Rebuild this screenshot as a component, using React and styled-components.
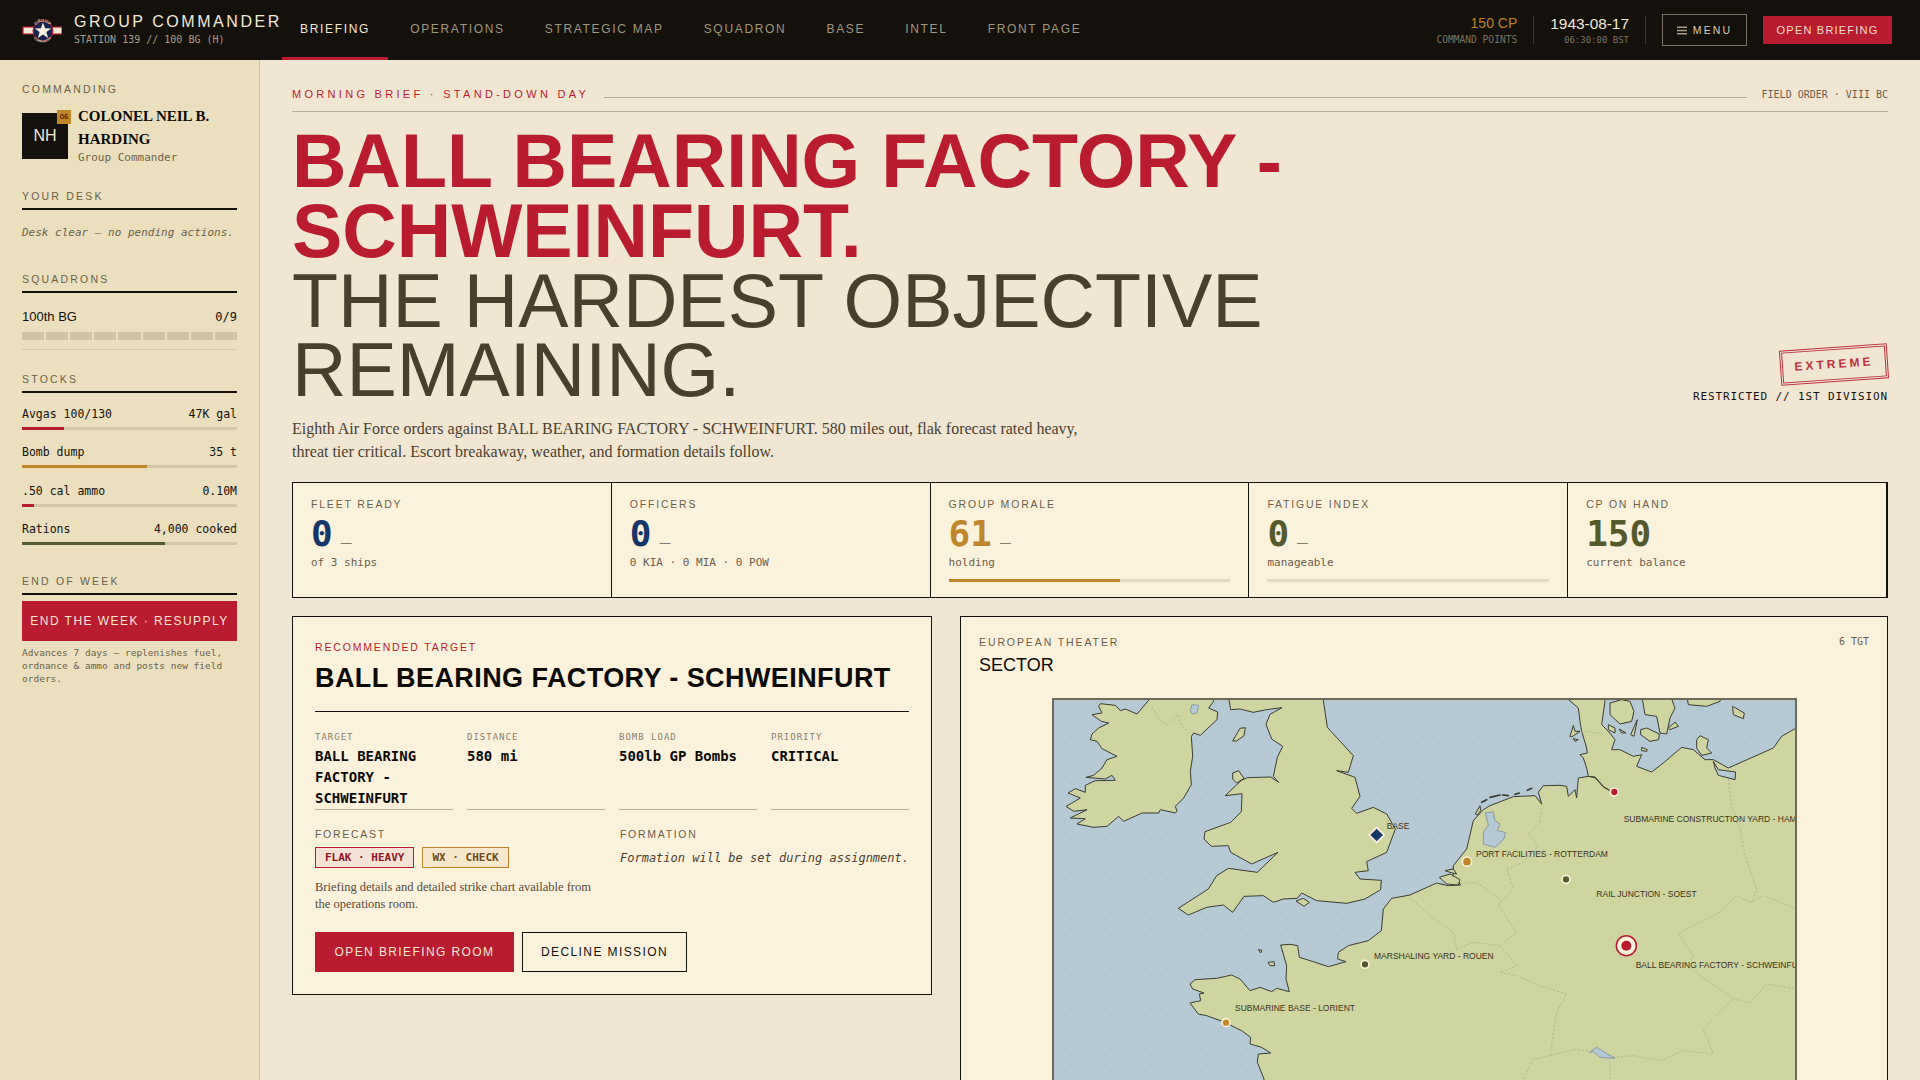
import React from 'react';
import styled, { createGlobalStyle } from 'styled-components';

const INK = '#14100c';
const RED = '#b81c2e';
const BRASS = '#c0862a';
const NAVY = '#14366a';
const OLIVE = '#555a2c';
const MUTED = '#6b5f4b';
const SANS = '"Liberation Sans", Arial, sans-serif';
const SERIF = '"Liberation Serif", "Times New Roman", serif';
const MONO = '"DejaVu Sans Mono", "Liberation Mono", monospace';

const GlobalStyle = createGlobalStyle`
  html, body {
    margin: 0;
    height: 100%;
    overflow: hidden;
    background: #f1e6d2;
    font-family: ${SANS};
    color: ${INK};
  }
  * { box-sizing: border-box; }
`;

const Shell = styled.div`
  height: 100vh;
  display: flex;
  flex-direction: column;
  overflow: hidden;
`;

const Header = styled.header`
  height: 60px;
  flex: none;
  background: ${INK};
  display: flex;
  align-items: stretch;
  padding: 0 28px 0 22px;
`;

const Brand = styled.div`
  display: flex;
  align-items: center;
  gap: 12px;
  width: 260px;
  flex: none;
`;

const BrandText = styled.div`
  display: flex;
  flex-direction: column;
  gap: 3px;
  margin-top: -2px;
`;

const BrandTitle = styled.div`
  font-size: 16px;
  line-height: 18px;
  letter-spacing: 2.56px;
  color: #f2e8d5;
  white-space: nowrap;
`;

const BrandSub = styled.div`
  font-family: ${MONO};
  font-size: 10px;
  line-height: 12px;
  color: #a89e88;
  white-space: nowrap;
`;

const Nav = styled.nav`
  display: flex;
  gap: 4px;
`;

const Tab = styled.a`
  display: flex;
  align-items: center;
  padding: 0 18px;
  font-size: 12px;
  letter-spacing: 1.68px;
  white-space: nowrap;
  color: ${(p) => (p.$active ? '#f2e8d5' : '#a0977f')};
  border-bottom: 3px solid ${(p) => (p.$active ? RED : 'transparent')};
`;

const HeaderRight = styled.div`
  margin-left: auto;
  display: flex;
  align-items: center;
`;

const Readout = styled.div`
  display: flex;
  flex-direction: column;
  align-items: flex-end;
  height: 28px;
  justify-content: center;
  gap: 2px;
  padding-right: 16px;
  margin-right: 16px;
  border-right: 1px solid #3c362c;
`;

const ReadoutValue = styled.div`
  font-size: ${(p) => p.$size}px;
  line-height: 17px;
  color: ${(p) => p.$color};
`;

const ReadoutSub = styled.div`
  font-family: ${MONO};
  font-size: ${(p) => p.$size}px;
  line-height: 12px;
  color: #7a7361;
`;

const MenuButton = styled.button`
  height: 32px;
  width: 85px;
  display: flex;
  align-items: center;
  justify-content: center;
  gap: 6px;
  background: transparent;
  border: 1px solid #7a7363;
  color: #d8cfba;
  font-family: ${SANS};
  font-size: 10.5px;
  letter-spacing: 2.1px;
  padding: 0;
`;

const HeaderCta = styled.button`
  margin-left: 16px;
  height: 28px;
  width: 129px;
  background: ${RED};
  border: none;
  color: #f2dfcf;
  font-family: ${SANS};
  font-size: 11px;
  letter-spacing: 1.2px;
  padding: 0;
`;

const Body = styled.div`
  flex: 1;
  min-height: 0;
  display: flex;
`;

const Sidebar = styled.aside`
  width: 260px;
  flex: none;
  background: #ebdfbd;
  border-right: 1px solid #cdbf9f;
  padding: 23px 22px 0;
  display: flex;
  flex-direction: column;
`;

const SideLabel = styled.div`
  font-size: 10.5px;
  line-height: 12px;
  letter-spacing: 2.2px;
  color: ${MUTED};
`;

const SideHead = styled(SideLabel)`
  margin-top: ${(p) => p.$top}px;
  padding-bottom: 6px;
  border-bottom: 2px solid ${INK};
`;

const Officer = styled.div`
  margin-top: 10px;
  display: flex;
  gap: 10px;
`;

const Avatar = styled.div`
  position: relative;
  margin-top: 8px;
  width: 46px;
  height: 46px;
  flex: none;
  background: ${INK};
  color: #f2e8d5;
  font-size: 16px;
  display: flex;
  align-items: center;
  justify-content: center;
`;

const RankBadge = styled.div`
  position: absolute;
  top: -3px;
  right: -3px;
  width: 14px;
  height: 14px;
  background: ${BRASS};
  color: ${INK};
  font-family: ${MONO};
  font-size: 7px;
  display: flex;
  align-items: center;
  justify-content: center;
`;

const OfficerName = styled.div`
  font-family: ${SERIF};
  font-weight: 700;
  font-size: 15px;
  line-height: 23px;
  color: #0c0a07;
`;

const OfficerRole = styled.div`
  font-family: ${MONO};
  font-size: 11px;
  line-height: 14px;
  color: ${MUTED};
`;

const DeskNote = styled.div`
  margin-top: 16px;
  font-family: ${MONO};
  font-style: italic;
  font-size: 11px;
  line-height: 14px;
  color: ${MUTED};
`;

const SquadRow = styled.div`
  margin-top: 17px;
  display: flex;
  justify-content: space-between;
  align-items: center;
  line-height: 14px;
  font-size: 13px;
`;

const MonoValue = styled.span`
  font-family: ${MONO};
  font-size: 12px;
`;

const Segments = styled.div`
  margin-top: 8px;
  display: grid;
  grid-template-columns: repeat(9, 1fr);
  gap: 2px;
  padding-bottom: 9px;
  border-bottom: 1px solid #d8cba8;
`;

const Segment = styled.div`
  height: 8px;
  background: #d1c3a5;
`;

const Stocks = styled.div`
  margin-top: 14px;
  display: flex;
  flex-direction: column;
  gap: 15.33px;
`;

const StockRow = styled.div`
  display: flex;
  justify-content: space-between;
  font-family: ${MONO};
  font-size: 11.5px;
  line-height: 14px;
`;

const Track = styled.div`
  margin-top: ${(p) => p.$top || 6}px;
  height: 3px;
  background: ${(p) => p.$bg || '#d3c6a8'};
`;

const Fill = styled.div`
  height: 100%;
  background: ${(p) => p.$color};
`;

const WeekButton = styled.button`
  margin-top: 6px;
  height: 40px;
  width: 100%;
  background: ${RED};
  border: none;
  color: #f6e6d4;
  font-family: ${SANS};
  font-size: 12px;
  letter-spacing: 1.45px;
  padding: 0;
  white-space: nowrap;
`;

const WeekNote = styled.div`
  margin-top: 5px;
  font-family: ${MONO};
  font-size: 9.5px;
  line-height: 13px;
  color: ${MUTED};
`;

const Main = styled.main`
  flex: 1;
  min-width: 0;
  padding: 28px 32px 0;
`;

const Eyebrow = styled.div`
  display: flex;
  align-items: center;
  gap: 15px;
  padding-bottom: 10px;
  border-bottom: 1px solid #b8ad98;
`;

const EyebrowText = styled.div`
  font-size: 11px;
  line-height: 13px;
  letter-spacing: 3.3px;
  color: ${RED};
  white-space: nowrap;
`;

const EyebrowLine = styled.div`
  flex: 1;
  height: 1px;
  margin-top: 6px;
  background: #b8ad98;
`;

const EyebrowMeta = styled.div`
  font-family: ${MONO};
  font-size: 10px;
  line-height: 13px;
  color: ${MUTED};
  white-space: nowrap;
`;

const Hero = styled.div`
  margin-top: 15px;
  display: flex;
  justify-content: space-between;
  align-items: flex-end;
`;

const HeroTitle = styled.h1`
  margin: 0;
  width: 1100px;
  font-size: 75.4px;
  line-height: 69.8px;
  font-weight: 400;
  color: #4a3f2c;
`;

const HeroStrong = styled.span`
  display: block;
  font-weight: 700;
  color: ${RED};
`;

const HeroAside = styled.div`
  display: flex;
  flex-direction: column;
  align-items: flex-end;
  gap: 8px;
  padding-bottom: 3px;
`;

const Stamp = styled.div`
  transform: rotate(-4deg);
  border: 3px double ${RED};
  padding: 7px 11.5px;
  font-weight: 700;
  font-size: 12px;
  line-height: 15px;
  letter-spacing: 3px;
  color: ${RED};
  opacity: 0.9;
`;

const Restricted = styled.div`
  font-family: ${MONO};
  font-size: 11px;
  line-height: 13px;
  letter-spacing: 0.88px;
  white-space: nowrap;
`;

const Lede = styled.p`
  margin: 12px 0 0;
  max-width: 800px;
  font-family: ${SERIF};
  font-size: 16px;
  line-height: 22.5px;
  color: #4a3f2c;
`;

const Stats = styled.div`
  margin-top: 19px;
  height: 116px;
  display: grid;
  grid-template-columns: repeat(5, 1fr);
  background: #fbf2dc;
  border: 1px solid ${INK};
`;

const StatCell = styled.div`
  border-right: 1px solid ${INK};
  padding: 15px 18px 0;
`;

const StatLabel = styled.div`
  font-size: 10.5px;
  line-height: 13px;
  letter-spacing: 1.8px;
  color: ${MUTED};
`;

const StatValue = styled.div`
  margin-top: 5px;
  height: 35px;
  display: flex;
  align-items: baseline;
  gap: 8px;
  font-family: ${MONO};
  font-weight: 700;
  font-size: 36px;
  line-height: 35px;
  color: ${(p) => p.$color};
`;

const StatDelta = styled.span`
  font-family: ${SANS};
  font-weight: 400;
  font-size: 11px;
  color: ${MUTED};
`;

const StatSub = styled.div`
  margin-top: 5px;
  font-family: ${MONO};
  font-size: 11px;
  line-height: 14px;
  color: ${MUTED};
`;

const Lower = styled.div`
  margin-top: 18px;
  display: grid;
  grid-template-columns: 640px 928px;
  gap: 28px;
  align-items: start;
`;

const Card = styled.section`
  background: #fbf2dc;
  border: 1px solid ${INK};
  padding: 24px 22px 22px;
`;

const CardKicker = styled.div`
  font-size: 10.5px;
  line-height: 12px;
  letter-spacing: 1.83px;
  color: ${RED};
`;

const CardTitle = styled.h2`
  margin: 9px 0 0;
  padding-bottom: 17px;
  font-size: 27px;
  line-height: 32px;
  font-weight: 700;
  letter-spacing: 0.42px;
  color: #0c0a07;
  border-bottom: 1px solid ${INK};
  white-space: nowrap;
`;

const FactGrid = styled.div`
  margin-top: 20px;
  display: grid;
  grid-template-columns: repeat(4, 1fr);
  gap: 14px;
`;

const Fact = styled.div`
  border-bottom: 1px solid #b8ad98;
`;

const FactLabel = styled.div`
  font-family: ${MONO};
  font-size: 9px;
  line-height: 11px;
  letter-spacing: 1px;
  color: #8a7f6a;
`;

const FactValue = styled.div`
  margin-top: 3px;
  font-family: ${MONO};
  font-weight: 700;
  font-size: 14px;
  line-height: 21px;
  color: #0c0a07;
`;

const DetailGrid = styled.div`
  margin-top: 18px;
  display: grid;
  grid-template-columns: 1fr 1fr;
  gap: 16px;
`;

const DetailLabel = styled.div`
  font-size: 10.5px;
  line-height: 12px;
  letter-spacing: 1.7px;
  color: ${MUTED};
`;

const Badges = styled.div`
  margin-top: 7px;
  display: flex;
  gap: 8px;
`;

const Badge = styled.span`
  height: 21px;
  padding: 0 9px;
  display: flex;
  align-items: center;
  font-family: ${MONO};
  font-weight: 700;
  font-size: 11px;
  white-space: nowrap;
  border: 1px solid ${(p) => p.$border};
  background: ${(p) => p.$bg};
  color: ${(p) => p.$color};
`;

const CardNote = styled.p`
  margin: 11px 0 0;
  font-family: ${SERIF};
  font-size: 12.5px;
  line-height: 17px;
  color: #574b38;
`;

const FormationNote = styled.div`
  margin-top: 10px;
  font-family: ${MONO};
  font-style: italic;
  font-size: 12px;
  line-height: 16px;
  color: #4a3f2c;
  white-space: nowrap;
`;

const Actions = styled.div`
  margin-top: 19px;
  display: flex;
  gap: 8px;
`;

const ActionButton = styled.button`
  height: 40px;
  width: ${(p) => p.$width}px;
  padding: 0;
  font-family: ${SANS};
  font-size: 12px;
  letter-spacing: 1.4px;
  background: ${(p) => (p.$primary ? RED : 'transparent')};
  color: ${(p) => (p.$primary ? '#f6e6d4' : INK)};
  border: ${(p) => (p.$primary ? 'none' : `1px solid ${INK}`)};
`;

const MapPanel = styled.section`
  background: #fbf2dc;
  border: 1px solid ${INK};
  padding: 19px 18px 18px;
  min-height: 620px;
`;

const MapHead = styled.div`
  display: flex;
  justify-content: space-between;
`;

const MapKicker = styled.div`
  font-size: 10.5px;
  line-height: 12px;
  letter-spacing: 1.9px;
  color: ${MUTED};
`;

const MapTitle = styled.div`
  margin-top: 7px;
  font-size: 18px;
  line-height: 21px;
  color: #0c0a07;
`;

const MapCount = styled.div`
  font-family: ${MONO};
  font-size: 10px;
  line-height: 12px;
  color: ${MUTED};
`;

const MapFrame = styled.div`
  margin: 22px auto 0;
  width: 745px;
  height: 600px;
  border: 2px solid #6f6a58;
`;

const MapSvg = styled.svg`
  display: block;
  width: 100%;
  height: 100%;
`;

const MapLabel = styled.text`
  font-family: ${SANS};
  font-size: 25.5px;
  fill: #3a3222;
`;

const NAV_ITEMS = ['BRIEFING', 'OPERATIONS', 'STRATEGIC MAP', 'SQUADRON', 'BASE', 'INTEL', 'FRONT PAGE'];

const STOCKS = [
  { name: 'Avgas 100/130', value: '47K gal', pct: 19.5, color: RED },
  { name: 'Bomb dump', value: '35 t', pct: 58, color: BRASS },
  { name: '.50 cal ammo', value: '0.10M', pct: 5.5, color: RED },
  { name: 'Rations', value: '4,000 cooked', pct: 66.5, color: OLIVE },
];

const STATS = [
  { label: 'FLEET READY', value: '0', delta: '—', sub: 'of 3 ships', color: NAVY },
  { label: 'OFFICERS', value: '0', delta: '—', sub: '0 KIA · 0 MIA · 0 POW', color: NAVY },
  { label: 'GROUP MORALE', value: '61', delta: '—', sub: 'holding', color: BRASS, bar: 61 },
  { label: 'FATIGUE INDEX', value: '0', delta: '—', sub: 'manageable', color: OLIVE, bar: 0 },
  { label: 'CP ON HAND', value: '150', sub: 'current balance', color: OLIVE },
];

const FACTS = [
  { label: 'TARGET', value: 'BALL BEARING FACTORY - SCHWEINFURT' },
  { label: 'DISTANCE', value: '580 mi' },
  { label: 'BOMB LOAD', value: '500lb GP Bombs' },
  { label: 'PRIORITY', value: 'CRITICAL' },
];

// outlines traced in 3x map units, viewBox below maps them back to page pixels
const LAND = [
  'M336 22 L291 75 256 60 241 65 226 49 181 44 176 52 186 72 156 77 184 97 206 102 176 117 156 135 151 152 171 157 186 179 231 202 201 212 186 237 161 259 138 265 196 270 216 259 226 274 166 275 136 289 136 310 106 299 84 312 121 327 96 342 78 352 101 367 141 362 91 387 136 389 111 405 161 415 201 412 236 382 251 397 306 372 356 372 361 362 406 372 411 367 406 352 431 327 454 287 451 247 458 202 454 142 461 132 481 139 531 92 533 69 506 57 521 37 516 22 Z',
  'M565 20 L572 62 600 60 640 70 680 62 726 56 690 76 678 106 695 150 728 172 712 205 700 262 716 280 692 264 622 266 604 274 556 320 606 314 604 368 572 400 495 428 492 450 514 472 565 470 572 490 635 525 714 490 652 550 565 538 530 560 505 600 415 658 445 678 500 655 550 648 578 670 612 622 670 620 700 640 730 630 772 628 785 612 830 635 920 643 975 630 1022 602 1024 574 960 570 945 550 985 545 980 518 1040 490 1066 420 1040 375 1000 355 950 373 935 358 960 322 945 265 890 245 925 250 940 200 862 115 848 20 Z',
  'M672 1900 L672 1170 652 1120 655 1095 692 1092 665 1075 630 1065 632 1045 605 1025 590 1018 555 1000 500 980 475 975 450 942 482 935 478 915 492 912 458 900 450 885 465 872 530 868 575 858 600 870 630 905 660 895 695 908 710 898 748 908 738 870 740 830 722 768 750 766 773 770 778 805 820 818 865 833 918 818 893 810 895 790 925 770 985 755 1024 725 1030 660 1055 628 1110 618 1190 582 1225 590 1262 588 1240 560 1240 530 1280 480 1300 395 1330 362 1350 350 1420 323 1485 320 1505 345 1495 310 1510 290 1560 289 1580 292 1585 322 1605 302 1610 327 1615 267 1645 262 1665 264 1690 292 1710 305 1690 294 1665 266 1645 262 1640 237 1630 207 1620 197 1642 192 1640 177 1625 127 1620 97 1615 57 1580 27 1575 17 1695 17 1695 37 1685 107 1705 127 1725 152 1715 182 1740 182 1780 202 1805 197 1790 232 1835 249 1870 222 1925 175 1960 182 1995 212 2020 212 2065 237 2200 177 2225 142 2265 119 2290 107 2290 1900 Z',
  'M1805 17 L1815 77 1850 82 1860 132 1880 135 1890 87 1905 57 1890 17 Z',
  'M1940 17 L1945 47 2000 52 2040 37 2045 17 Z',
];

const ISLANDS = [
  'M578 156 L600 118 616 116 612 140 590 156 Z',
  'M578 252 L596 245 612 268 590 282 578 270 Z',
  'M768 636 L790 628 808 640 792 652 Z',
  'M655 782 L666 784 662 792 Z',
  'M684 820 L702 818 704 830 690 830 Z',
  'M1198 565 L1230 555 1260 572 1255 588 1220 585 Z',
  'M1215 545 L1240 540 1250 555 1230 550 Z',
  'M1306 375 L1320 350 1322 365 1312 378 Z',
  'M1710 42 L1745 32 1770 37 1782 67 1775 97 1740 105 1710 77 Z',
  'M1705 107 L1725 117 1725 132 1705 122 Z',
  'M1738 120 L1758 132 1745 132 Z',
  'M1792 92 L1782 142 1772 137 Z',
  'M1802 122 L1820 117 1858 135 1856 152 1830 157 1802 137 Z',
  'M1805 175 L1822 182 1820 187 1805 185 Z',
  'M1885 117 L1905 99 1915 112 1890 122 Z',
  'M1970 152 L1980 140 2005 152 2000 177 2015 192 1985 199 1970 177 Z',
  'M2078 52 L2113 72 2110 89 2080 77 Z',
  'M1590 142 L1600 109 1605 127 1620 127 1595 144 Z',
  'M1600 149 L1615 152 1605 157 Z',
];

const SHOALS = [
  'M1325 340 L1340 332',
  'M1350 325 L1380 318',
  'M1388 318 L1405 320',
  'M1425 316 L1438 312',
  'M1462 304 L1475 298',
];

const LAGOON = 'M2020 217 L2035 242 2087 249 2085 272 2035 259 2025 237 Z';

const LAKES = [
  'M456 47 L476 49 471 72 456 75 451 65 Z',
  'M1336 372 L1360 368 1365 395 1380 405 1372 425 1396 430 1392 450 1365 475 1330 465 1330 430 1345 408 Z',
  'M1648 1090 L1670 1075 1725 1108 1680 1105 1660 1088 Z',
];

const BORDERS = [
  'M336 52 L356 92 381 107 414 77 426 112 451 135',
  'M1505 345 L1500 400 1465 435 1495 470 1450 520 1400 540 1420 600 1375 650 1430 730 1380 770 1430 830 1380 850 1430 860 1500 890 1580 915 1550 970 1530 1100',
  'M1110 625 L1170 680 1240 730 1250 780 1300 760 1380 770',
  'M1190 590 L1310 580 1380 630 1375 650',
  'M1450 1170 L1480 1110 1530 1100 1610 1080 1670 1090 1725 1105 1780 1100 1860 1115 1930 1085 2020 1095 1990 1020 2080 930 2130 940 2180 885 2270 900',
  'M2065 270 L2075 350 2100 420 2115 500 2150 600 2135 640 2090 620 2040 670 1940 720 1915 735 1960 800 1940 830 2080 930',
  'M2135 640 L2170 620 2270 660',
  'M1622 125 L1690 135',
  'M1710 1105 L1710 1170',
];

const TARGETS = [
  { cx: 1723, cy: 309, r: 9, color: RED, label: 'SUBMARINE CONSTRUCTION YARD - HAMBURG', x: 1751, y: 399 },
  { cx: 1281, cy: 518, r: 11, color: BRASS, label: 'PORT FACILITIES - ROTTERDAM', x: 1308, y: 504 },
  { cx: 1578, cy: 571, r: 9, color: OLIVE, label: 'RAIL JUNCTION - SOEST', x: 1669, y: 624 },
  { cx: 975, cy: 826, r: 9, color: OLIVE, label: 'MARSHALING YARD - ROUEN', x: 1002, y: 809 },
  { cx: 558, cy: 1001, r: 9, color: BRASS, label: 'SUBMARINE BASE - LORIENT', x: 585, y: 965 },
];

const BrandLogo = () => (
  <svg width="40" height="30" viewBox="0 0 40 30">
    <defs>
      <path id="logoTop" d="M13 12 A8 8 0 0 1 28 12" />
      <path id="logoBottom" d="M11 22 A11 11 0 0 0 30 22" />
    </defs>
    <rect x="1" y="12" width="39" height="7" fill="#f2e8d5" stroke={RED} strokeWidth="1.2" />
    <circle cx="21" cy="16" r="10" fill="#1b2450" stroke={RED} strokeWidth="1" />
    <polygon
      points="21,7.5 23.1,13.3 29.2,13.4 24.4,17.1 26.1,23 21,19.6 15.9,23 17.6,17.1 12.8,13.4 18.9,13.3"
      fill="#f6f0e0"
    />
    <text fontFamily={SANS} fontWeight="700" fontSize="4.2" fill="#d8cfba" textAnchor="middle">
      <textPath href="#logoTop" startOffset="50%">GROUP</textPath>
    </text>
    <text fontFamily={SANS} fontWeight="700" fontSize="3" fill="#d8cfba" textAnchor="middle">
      <textPath href="#logoBottom" startOffset="50%">COMMANDER</textPath>
    </text>
  </svg>
);

const MenuGlyph = () => (
  <svg width="10" height="9" viewBox="0 0 10 9">
    <rect y="0.5" width="10" height="1.5" fill="#a89e88" />
    <rect y="3.75" width="10" height="1.5" fill="#a89e88" />
    <rect y="7" width="10" height="1.5" fill="#a89e88" />
  </svg>
);

const TheaterMap = () => (
  <MapSvg viewBox="42 33 2223 1788" preserveAspectRatio="xMidYMin slice">
    <defs>
      <pattern id="seaDots" width="34" height="34" patternUnits="userSpaceOnUse">
        <circle cx="8" cy="8" r="2" fill="#c3d4dd" />
        <circle cx="25" cy="25" r="2" fill="#c3d4dd" />
      </pattern>
    </defs>
    <rect x="0" y="0" width="2400" height="2000" fill="#b5c9d5" />
    <rect x="0" y="0" width="2400" height="2000" fill="url(#seaDots)" />
    {[...LAND, ...ISLANDS].map((d) => (
      <path key={d} d={d} fill="#cfd5a0" stroke="#3a3c30" strokeWidth="3" strokeLinejoin="round" />
    ))}
    <path d={LAGOON} fill="#b5c9d5" stroke="#3a3c30" strokeWidth="3" strokeLinejoin="round" />
    {BORDERS.map((d) => (
      <path key={d} d={d} fill="none" stroke="#8f9272" strokeWidth="2.4" strokeDasharray="7 5" opacity="0.5" />
    ))}
    {SHOALS.map((d) => (
      <path key={d} d={d} fill="none" stroke="#3a3c30" strokeWidth="5" strokeLinecap="round" />
    ))}
    {LAKES.map((d) => (
      <path key={d} d={d} fill="#b5c9d5" stroke="#8a9aa0" strokeWidth="3" strokeLinejoin="round" />
    ))}
    <MapLabel x="1040" y="419">BASE</MapLabel>
    <rect
      x="994"
      y="422"
      width="32"
      height="32"
      transform="rotate(45 1010 438)"
      fill={NAVY}
      stroke="#fbf2dc"
      strokeWidth="5"
    />
    {TARGETS.map((t) => (
      <g key={t.label}>
        <circle cx={t.cx} cy={t.cy} r={t.r + 3} fill={t.color} stroke="#fbf2dc" strokeWidth="5" />
        <MapLabel x={t.x} y={t.y}>{t.label}</MapLabel>
      </g>
    ))}
    <circle cx="1759" cy="770" r="30" fill="#fbf2dc" stroke={RED} strokeWidth="4.5" />
    <circle cx="1759" cy="770" r="15" fill={RED} />
    <MapLabel x="1787" y="837">BALL BEARING FACTORY - SCHWEINFURT</MapLabel>
  </MapSvg>
);

export default function App() {
  return (
    <Shell>
      <GlobalStyle />
      <Header>
        <Brand>
          <BrandLogo />
          <BrandText>
            <BrandTitle>GROUP COMMANDER</BrandTitle>
            <BrandSub>STATION 139 // 100 BG (H)</BrandSub>
          </BrandText>
        </Brand>
        <Nav>
          {NAV_ITEMS.map((item, i) => (
            <Tab key={item} $active={i === 0}>{item}</Tab>
          ))}
        </Nav>
        <HeaderRight>
          <Readout>
            <ReadoutValue $size={14} $color="#b9822a">150 CP</ReadoutValue>
            <ReadoutSub $size={9.6}>COMMAND POINTS</ReadoutSub>
          </Readout>
          <Readout>
            <ReadoutValue $size={15.4} $color="#f2e8d5">1943-08-17</ReadoutValue>
            <ReadoutSub $size={9}>06:30:00 BST</ReadoutSub>
          </Readout>
          <MenuButton><MenuGlyph />MENU</MenuButton>
          <HeaderCta>OPEN BRIEFING</HeaderCta>
        </HeaderRight>
      </Header>
      <Body>
        <Sidebar>
          <SideLabel>COMMANDING</SideLabel>
          <Officer>
            <Avatar>
              NH
              <RankBadge>O6</RankBadge>
            </Avatar>
            <div>
              <OfficerName>COLONEL NEIL B. HARDING</OfficerName>
              <OfficerRole>Group Commander</OfficerRole>
            </div>
          </Officer>

          <SideHead $top={25}>YOUR DESK</SideHead>
          <DeskNote>Desk clear — no pending actions.</DeskNote>

          <SideHead $top={33}>SQUADRONS</SideHead>
          <SquadRow>
            <span>100th BG</span>
            <MonoValue>0/9</MonoValue>
          </SquadRow>
          <Segments>
            {Array.from({ length: 9 }, (_, i) => <Segment key={i} />)}
          </Segments>

          <SideHead $top={23}>STOCKS</SideHead>
          <Stocks>
            {STOCKS.map((s) => (
              <div key={s.name}>
                <StockRow>
                  <span>{s.name}</span>
                  <span>{s.value}</span>
                </StockRow>
                <Track>
                  <Fill $color={s.color} style={{ width: `${s.pct}%` }} />
                </Track>
              </div>
            ))}
          </Stocks>

          <SideHead $top={30}>END OF WEEK</SideHead>
          <WeekButton>END THE WEEK · RESUPPLY</WeekButton>
          <WeekNote>Advances 7 days — replenishes fuel, ordnance &amp; ammo and posts new field orders.</WeekNote>
        </Sidebar>

        <Main>
          <Eyebrow>
            <EyebrowText>MORNING BRIEF · STAND-DOWN DAY</EyebrowText>
            <EyebrowLine />
            <EyebrowMeta>FIELD ORDER · VIII BC</EyebrowMeta>
          </Eyebrow>

          <Hero>
            <HeroTitle>
              <HeroStrong>BALL BEARING FACTORY - SCHWEINFURT.</HeroStrong>
              THE HARDEST OBJECTIVE REMAINING.
            </HeroTitle>
            <HeroAside>
              <Stamp>EXTREME</Stamp>
              <Restricted>RESTRICTED // 1ST DIVISION</Restricted>
            </HeroAside>
          </Hero>

          <Lede>
            Eighth Air Force orders against BALL BEARING FACTORY - SCHWEINFURT. 580 miles out, flak forecast rated
            heavy, threat tier critical. Escort breakaway, weather, and formation details follow.
          </Lede>

          <Stats>
            {STATS.map((s) => (
              <StatCell key={s.label}>
                <StatLabel>{s.label}</StatLabel>
                <StatValue $color={s.color}>
                  {s.value}
                  {s.delta && <StatDelta>{s.delta}</StatDelta>}
                </StatValue>
                <StatSub>{s.sub}</StatSub>
                {s.bar !== undefined && (
                  <Track $top={9} $bg="#e2d9c3">
                    <Fill $color={s.color} style={{ width: `${s.bar}%` }} />
                  </Track>
                )}
              </StatCell>
            ))}
          </Stats>

          <Lower>
            <Card>
              <CardKicker>RECOMMENDED TARGET</CardKicker>
              <CardTitle>BALL BEARING FACTORY - SCHWEINFURT</CardTitle>
              <FactGrid>
                {FACTS.map((f) => (
                  <Fact key={f.label}>
                    <FactLabel>{f.label}</FactLabel>
                    <FactValue>{f.value}</FactValue>
                  </Fact>
                ))}
              </FactGrid>
              <DetailGrid>
                <div>
                  <DetailLabel>FORECAST</DetailLabel>
                  <Badges>
                    <Badge $border={RED} $bg="#f5e3d6" $color="#8f1626">FLAK · HEAVY</Badge>
                    <Badge $border={BRASS} $bg="#f7e8cc" $color="#6e4a14">WX · CHECK</Badge>
                  </Badges>
                  <CardNote>Briefing details and detailed strike chart available from the operations room.</CardNote>
                </div>
                <div>
                  <DetailLabel>FORMATION</DetailLabel>
                  <FormationNote>Formation will be set during assignment.</FormationNote>
                </div>
              </DetailGrid>
              <Actions>
                <ActionButton $primary $width={199}>OPEN BRIEFING ROOM</ActionButton>
                <ActionButton $width={165}>DECLINE MISSION</ActionButton>
              </Actions>
            </Card>

            <MapPanel>
              <MapHead>
                <div>
                  <MapKicker>EUROPEAN THEATER</MapKicker>
                  <MapTitle>SECTOR</MapTitle>
                </div>
                <MapCount>6 TGT</MapCount>
              </MapHead>
              <MapFrame>
                <TheaterMap />
              </MapFrame>
            </MapPanel>
          </Lower>
        </Main>
      </Body>
    </Shell>
  );
}
